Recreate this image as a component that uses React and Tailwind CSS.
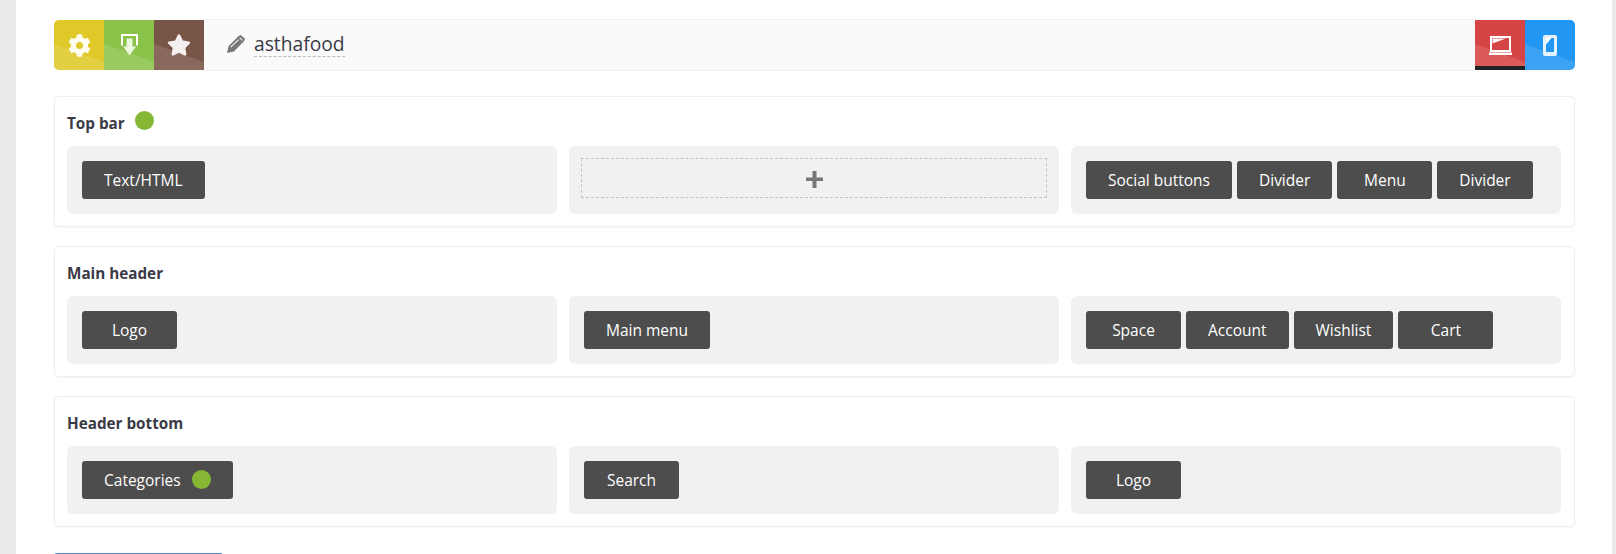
import { FaCog, FaStar } from "react-icons/fa";

const rows = [
  {
    title: "Top bar",
    dot: true,
    cols: [["Text/HTML"], null, ["Social buttons", "Divider", "Menu", "Divider"]],
  },
  {
    title: "Main header",
    cols: [["Logo"], ["Main menu"], ["Space", "Account", "Wishlist", "Cart"]],
  },
  {
    title: "Header bottom",
    cols: [["Categories"], ["Search"], ["Logo"]],
  },
];

const Dot = ({ className }) => <span className={`inline-block h-[19px] w-[19px] rounded-full bg-[#85b735] ${className}`} />;

const ToolButton = ({ color, active, className = "", children }) => (
  <div className={`relative mt-px flex h-[50px] w-[50px] items-center justify-center overflow-hidden ${color} ${className}`}>
    <div className="absolute inset-0 bg-white/[0.12] [clip-path:polygon(0_48%,100%_84%,100%_100%,0_100%)]" />
    {active && <div className="absolute inset-x-0 bottom-0 h-1 bg-[#222]" />}
    <div className="relative flex">{children}</div>
  </div>
);

const DownloadIcon = () => (
  <svg width="17" height="22" viewBox="0 0 17 22">
    <path d="M1 11.5V1H16V11.5" fill="none" stroke="#fff" strokeWidth="2" />
    <path d="M5.5 4.5H11.5V12.5H15L8.5 21.5L2 12.5H5.5Z" fill="#eaf7dd" />
  </svg>
);

const PencilIcon = () => (
  <svg width="18" height="18" viewBox="0 0 17 17" className="mb-[2px]">
    <path d="M0 17L1.5 10.5L11 1L13 0L17 3.5L16 6L6.5 15.5Z" fill="#777" />
    <path d="M3.5 11.5L11 4.3" stroke="#fafafa" strokeWidth="1" />
    <path d="M12 2.5L14.5 5" stroke="#fafafa" strokeWidth="1" />
  </svg>
);

const LaptopIcon = () => (
  <svg width="23" height="19" viewBox="0 0 23 19">
    <path d="M2 1H21V15H2Z" fill="none" stroke="#fff" strokeWidth="2" />
    <path d="M3.5 7.5L17 2.5H3.5Z" fill="#fff" fillOpacity="0.95" />
    <path d="M0 16.5H23V19H0Z" fill="#fff" />
  </svg>
);

const PhoneIcon = () => (
  <svg width="14" height="21" viewBox="0 0 14 21">
    <rect x="0" y="0" width="14" height="21" rx="2" fill="#e6f2fd" />
    <path d="M3 3H11V17H3Z" fill="#2196f3" />
    <path d="M3 9.5L8.5 3H3Z" fill="#fff" />
  </svg>
);

const PlusIcon = () => (
  <svg width="17" height="17" viewBox="0 0 17 17" className="mt-[2px]">
    <path d="M6.5 0H10.5V6.5H17V10H10.5V17H6.5V10H0V6.5H6.5Z" fill="#777" />
  </svg>
);

const Item = ({ label, dot }) => (
  <div className="flex h-[38px] min-w-[95px] items-center justify-center rounded-[3px] bg-[#4d4d4d] px-[22px] text-[15.5px] text-white">
    <span className="mt-[2px]">{label}</span>
    {dot && <Dot className="mb-[2px] ml-[11px]" />}
  </div>
);

export default function App() {
  return (
    <div className="h-[554px] overflow-hidden bg-[#ebebeb] pl-4 pr-1 font-['Open_Sans',sans-serif] text-[#3a3a46]">
      <div className="h-full bg-white pl-[38px] pr-[37px] pt-[19px]">
        <div className="flex h-[52px] items-start">
          <ToolButton color="bg-[#dfc928]" className="rounded-l-[5px]">
            <FaCog className="text-[23px] text-[#fffdf0]" />
          </ToolButton>
          <ToolButton color="bg-[#8bc34a]">
            <DownloadIcon />
          </ToolButton>
          <ToolButton color="bg-[#795548]">
            <FaStar className="text-[24px] text-[#f5f0f0]" />
          </ToolButton>
          <div className="flex h-[52px] flex-1 items-center border-y border-[#f0f0f0] bg-[#fafafa] pl-[23px]">
            <PencilIcon />
            <span className="mb-[1px] ml-[9px] border-b border-dashed border-[#bbb] text-[19.25px] font-medium leading-[24px]">asthafood</span>
          </div>
          <ToolButton color="bg-[#d64545]" active>
            <LaptopIcon />
          </ToolButton>
          <ToolButton color="bg-[#2196f3]" className="rounded-r-[5px]">
            <PhoneIcon />
          </ToolButton>
        </div>

        <div className="mt-[25px] flex flex-col gap-[19px]">
          {rows.map((row) => (
            <section key={row.title} className="rounded-[5px] border border-[#eeeeee] bg-white pb-3 pl-3 pr-[13px] pt-[11px] shadow-[0_1px_3px_rgba(0,0,0,0.04)]">
              <div className="mb-[8px] flex h-[30px] items-center text-[15.25px] font-bold">
                {row.title}
                {row.dot && <Dot className="mb-[6px] ml-[10px]" />}
              </div>
              <div className="grid grid-cols-3 gap-3">
                {row.cols.map((items, i) => (
                  <div key={i} className="flex h-[68px] items-center gap-[5px] rounded-[6px] bg-[#f1f1f1] px-[15px]">
                    {items ? (
                      items.map((label, j) => <Item key={j} label={label} dot={label === "Categories"} />)
                    ) : (
                      <div className="-mx-[3px] mb-1 flex h-10 flex-1 items-center justify-center border border-dashed border-[#c4c4c4]">
                        <PlusIcon />
                      </div>
                    )}
                  </div>
                ))}
              </div>
            </section>
          ))}
        </div>
        <div className="mt-[26px] h-8 w-[169px] rounded-t-[3px] bg-[#4a86c5]" />
      </div>
    </div>
  );
}
